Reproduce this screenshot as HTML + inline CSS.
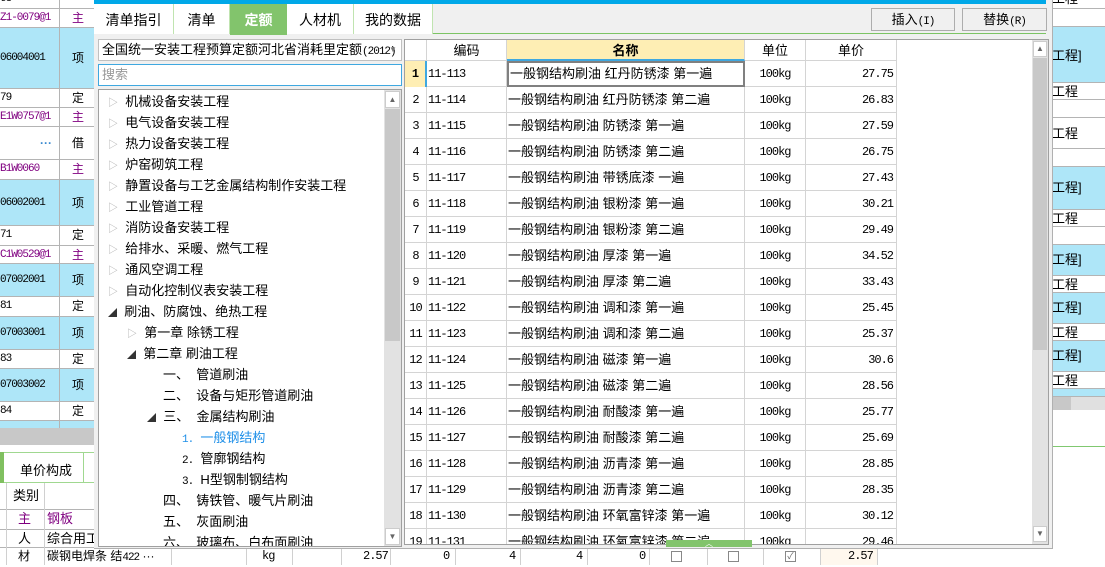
<!DOCTYPE html>
<html><head><meta charset="utf-8"><style>
*{box-sizing:border-box;margin:0;padding:0}
body{width:1105px;height:565px;overflow:hidden;background:#fff;position:relative;font-family:"Liberation Sans","Noto Sans CJK SC","WenQuanYi Zen Hei",sans-serif;font-size:13px;color:#000}
.a{position:absolute}
.bg{position:absolute;border-bottom:1px solid #b4b4b4;white-space:nowrap;overflow:hidden;line-height:18px}
.blue{background:#aee6f8}
.t{position:absolute;white-space:nowrap}
.tree div{position:absolute;white-space:nowrap;height:21px;line-height:21px}
.grid .r{position:absolute;left:0;width:492px;height:26px;border-bottom:1px solid #d4d4d4}
.grid .c{position:absolute;top:0;height:26px;line-height:26px;border-right:1px solid #d4d4d4;white-space:nowrap;overflow:hidden;padding:0 3px}
.mono{font-family:"Liberation Mono","DejaVu Sans Mono",monospace;font-size:12px;letter-spacing:-1px}
.ms{font-family:"Liberation Mono","DejaVu Sans Mono",monospace;font-size:11px;letter-spacing:-1px}
.tri{color:#aaa;font-size:10px}
.tri2{color:#333;font-size:9px}
</style></head><body>

<!-- background left -->
<div class="a" style="left:0;top:0;width:94px;height:430px;font-size:12px">
 <div class="bg" style="top:-10px;height:19px;width:94px"><span class="t ms" style="left:0;top:0">68</span></div>
 <div class="bg" style="top:9px;height:19px;width:94px;color:#800080"><span class="t ms" style="left:0">Z1-0079@1</span><span class="t" style="left:72px">主</span></div>
 <div class="bg blue" style="top:28px;height:61px;width:94px"><span class="t ms" style="left:0;top:21px">06004001</span><span class="t" style="left:72px;top:21px">项</span></div>
 <div class="bg" style="top:89px;height:19px;width:94px"><span class="t ms" style="left:0">79</span><span class="t" style="left:72px">定</span></div>
 <div class="bg" style="top:108px;height:19px;width:94px;color:#800080"><span class="t ms" style="left:0">E1W0757@1</span><span class="t" style="left:72px">主</span></div>
 <div class="bg" style="top:127px;height:33px;width:94px"><span class="t" style="left:40px;top:7px;color:#3a8ad0;font-weight:bold">···</span><span class="t" style="left:72px;top:7px">借</span></div>
 <div class="bg" style="top:160px;height:20px;width:94px;color:#800080"><span class="t ms" style="left:0">B1W0060</span><span class="t" style="left:72px">主</span></div>
 <div class="bg blue" style="top:180px;height:46px;width:94px"><span class="t ms" style="left:0;top:14px">06002001</span><span class="t" style="left:72px;top:14px">项</span></div>
 <div class="bg" style="top:226px;height:20px;width:94px"><span class="t ms" style="left:0">71</span><span class="t" style="left:72px">定</span></div>
 <div class="bg" style="top:246px;height:18px;width:94px;color:#800080"><span class="t ms" style="left:0">C1W0529@1</span><span class="t" style="left:72px">主</span></div>
 <div class="bg blue" style="top:264px;height:33px;width:94px"><span class="t ms" style="left:0;top:7px">07002001</span><span class="t" style="left:72px;top:7px">项</span></div>
 <div class="bg" style="top:297px;height:20px;width:94px"><span class="t ms" style="left:0">81</span><span class="t" style="left:72px">定</span></div>
 <div class="bg blue" style="top:317px;height:33px;width:94px"><span class="t ms" style="left:0;top:7px">07003001</span><span class="t" style="left:72px;top:7px">项</span></div>
 <div class="bg" style="top:350px;height:19px;width:94px"><span class="t ms" style="left:0">83</span><span class="t" style="left:72px">定</span></div>
 <div class="bg blue" style="top:369px;height:33px;width:94px"><span class="t ms" style="left:0;top:7px">07003002</span><span class="t" style="left:72px;top:7px">项</span></div>
 <div class="bg" style="top:402px;height:19px;width:94px"><span class="t ms" style="left:0">84</span><span class="t" style="left:72px">定</span></div>
 <div class="bg blue" style="top:421px;height:9px;width:94px"></div>
 <div class="a" style="left:59px;top:0;width:1px;height:430px;background:#b4b4b4"></div>
</div>
<div class="a" style="left:0;top:428px;width:94px;height:17px;background:#c8c8c8"></div>
<div class="a" style="left:0;top:452px;width:94px;height:31px;border-top:1px solid #a0d890;border-bottom:1px solid #a0d890"></div>
<div class="a" style="left:0;top:452px;width:4px;height:31px;background:#80c060"></div>
<div class="t" style="left:20px;top:460px">单价构成</div>
<div class="a" style="left:83px;top:452px;width:1px;height:31px;background:#a0d890"></div>
<div class="a" style="left:0;top:483px;width:94px;height:82px">
 <div class="bg" style="top:0;height:27px;width:94px"><span class="t" style="left:13px;top:4px">类别</span></div>
 <div class="bg" style="top:27px;height:20px;width:94px;color:#800080"><span class="t" style="left:18px">主</span><span class="t" style="left:47px">钢板</span></div>
 <div class="bg" style="top:47px;height:18px;width:94px"><span class="t" style="left:18px">人</span><span class="t" style="left:47px">综合用工</span></div>
 <div class="a" style="left:6px;top:0;width:1px;height:82px;background:#d0d0d0"></div>
 <div class="a" style="left:44px;top:0;width:1px;height:82px;background:#d0d0d0"></div>
</div>
<!-- bottom row -->
<div class="a" style="left:0;top:548px;width:1105px;height:17px;line-height:17px;font-size:12px">
 <span class="t" style="left:18px">材</span><span class="t" style="left:47px">碳钢电焊条 结<span class="ms">422</span> ···</span>
 <span class="t mono" style="left:262px">kg</span><span class="t mono" style="left:363px">2.57</span>
 <span class="t mono" style="left:443px">0</span><span class="t mono" style="left:509px">4</span><span class="t mono" style="left:576px">4</span><span class="t mono" style="left:639px">0</span>
 <span class="a" style="left:671px;top:3px;width:11px;height:11px;border:1px solid #888"></span>
 <span class="a" style="left:728px;top:3px;width:11px;height:11px;border:1px solid #888"></span>
 <span class="a" style="left:785px;top:3px;width:11px;height:11px;border:1px solid #888;font-size:9px;line-height:9px;color:#666;text-align:center">✓</span>
 <span class="a" style="left:820px;top:0;width:57px;height:17px;background:#fff8ee"></span>
 <span class="t mono" style="left:848px">2.57</span>
 <span class="a" style="left:44px;top:0;width:1px;height:17px;background:#d0d0d0"></span>
 <span class="a" style="left:171px;top:0;width:1px;height:17px;background:#d0d0d0"></span>
 <span class="a" style="left:246px;top:0;width:1px;height:17px;background:#d0d0d0"></span>
 <span class="a" style="left:292px;top:0;width:1px;height:17px;background:#d0d0d0"></span>
 <span class="a" style="left:341px;top:0;width:1px;height:17px;background:#d0d0d0"></span>
 <span class="a" style="left:390px;top:0;width:1px;height:17px;background:#d0d0d0"></span>
 <span class="a" style="left:455px;top:0;width:1px;height:17px;background:#d0d0d0"></span>
 <span class="a" style="left:520px;top:0;width:1px;height:17px;background:#d0d0d0"></span>
 <span class="a" style="left:587px;top:0;width:1px;height:17px;background:#d0d0d0"></span>
 <span class="a" style="left:649px;top:0;width:1px;height:17px;background:#d0d0d0"></span>
 <span class="a" style="left:707px;top:0;width:1px;height:17px;background:#d0d0d0"></span>
 <span class="a" style="left:763px;top:0;width:1px;height:17px;background:#d0d0d0"></span>
 <span class="a" style="left:820px;top:0;width:1px;height:17px;background:#d0d0d0"></span>
 <span class="a" style="left:877px;top:0;width:1px;height:17px;background:#d0d0d0"></span>
</div>

<!-- background right -->
<div class="a" style="left:1052px;top:0;width:53px;height:410px;font-size:13px">
 <div class="bg" style="top:-10px;height:19px;width:53px"><span class="t" style="left:0;top:0">工程</span></div>
 <div class="bg" style="top:9px;height:18px;width:53px"></div>
 <div class="bg blue" style="top:27px;height:56px;width:53px"><span class="t" style="left:0;top:20px">工程]</span></div>
 <div class="bg" style="top:83px;height:17px;width:53px"><span class="t" style="left:0">工程</span></div>
 <div class="bg" style="top:100px;height:18px;width:53px"></div>
 <div class="bg" style="top:118px;height:31px;width:53px"><span class="t" style="left:0;top:7px">工程</span></div>
 <div class="bg" style="top:149px;height:18px;width:53px"></div>
 <div class="bg blue" style="top:167px;height:43px;width:53px"><span class="t" style="left:0;top:12px">工程]</span></div>
 <div class="bg" style="top:210px;height:17px;width:53px"><span class="t" style="left:0">工程</span></div>
 <div class="bg" style="top:227px;height:18px;width:53px"></div>
 <div class="bg blue" style="top:245px;height:31px;width:53px"><span class="t" style="left:0;top:6px">工程]</span></div>
 <div class="bg" style="top:276px;height:17px;width:53px"><span class="t" style="left:0">工程</span></div>
 <div class="bg blue" style="top:293px;height:31px;width:53px"><span class="t" style="left:0;top:6px">工程]</span></div>
 <div class="bg" style="top:324px;height:17px;width:53px"><span class="t" style="left:0">工程</span></div>
 <div class="bg blue" style="top:341px;height:31px;width:53px"><span class="t" style="left:0;top:6px">工程]</span></div>
 <div class="bg" style="top:372px;height:17px;width:53px"><span class="t" style="left:0">工程</span></div>
 <div class="bg blue" style="top:389px;height:8px;width:53px"></div>
</div>
<div class="a" style="left:1052px;top:397px;width:53px;height:13px;background:#e0e0e0"></div>
<div class="a" style="left:1052px;top:397px;width:19px;height:13px;background:#c8c8c8"></div>
<div class="a" style="left:1052px;top:446px;width:53px;height:1px;background:#80c870"></div>

<!-- dialog -->
<div class="a" style="left:94px;top:0;width:959px;height:549px;background:#f0f0f0;border-right:1px solid #b0b0b0;border-bottom:1px solid #b0b0b0"></div>
<div class="a" style="left:94px;top:0;width:952px;height:4px;background:#00a8e8"></div>
<!-- tabs -->
<div class="a" style="left:94px;top:4px;width:952px;height:30px;border-bottom:1px solid #7cc464"></div>
<div class="a" style="left:94px;top:4px;width:80px;height:30px;background:#fff;border-right:1px solid #c0e4b0;text-align:center;line-height:32px;font-size:14px">清单指引</div>
<div class="a" style="left:174px;top:4px;width:56px;height:30px;background:#fff;border-right:1px solid #c0e4b0;text-align:center;line-height:32px;font-size:14px">清单</div>
<div class="a" style="left:230px;top:4px;width:57px;height:31px;background:#82c46c;color:#fff;font-weight:bold;text-align:center;line-height:32px;font-size:14px">定额</div>
<div class="a" style="left:287px;top:4px;width:67px;height:30px;background:#fff;border-right:1px solid #c0e4b0;text-align:center;line-height:32px;font-size:14px">人材机</div>
<div class="a" style="left:354px;top:4px;width:79px;height:30px;background:#fff;border-right:1px solid #c0e4b0;text-align:center;line-height:32px;font-size:14px">我的数据</div>
<div class="a" style="left:871px;top:8px;width:84px;height:23px;border:1px solid #adadad;background:#f0f0f0;text-align:center;line-height:21px;font-size:13px">插入<span class="ms">(I)</span></div>
<div class="a" style="left:962px;top:8px;width:85px;height:23px;border:1px solid #adadad;background:#f0f0f0;text-align:center;line-height:21px;font-size:13px">替换<span class="ms">(R)</span></div>

<!-- dropdown -->
<div class="a" style="left:98px;top:39px;width:304px;height:22px;background:#fff;border:1px solid #c0c0c0;line-height:20px;padding-left:3px;font-size:13px;white-space:nowrap">全国统一安装工程预算定额河北省消耗里定额<span class="ms">(2012)</span><span class="t" style="left:290px;top:0;color:#777;font-size:8px">▼</span></div>
<div class="a" style="left:98px;top:64px;width:304px;height:22px;background:#fff;border:1px solid #3fa8e0;line-height:20px;padding-left:3px;color:#999;font-size:13px">搜索</div>
<!-- tree -->
<div class="a tree" style="left:98px;top:89px;width:304px;height:458px;background:#fff;border:1px solid #a0a0a0;overflow:hidden;font-size:13px">
 <div style="left:9px;top:1px"><span class="tri">▷</span>&nbsp; 机械设备安装工程</div>
 <div style="left:9px;top:22px"><span class="tri">▷</span>&nbsp; 电气设备安装工程</div>
 <div style="left:9px;top:43px"><span class="tri">▷</span>&nbsp; 热力设备安装工程</div>
 <div style="left:9px;top:64px"><span class="tri">▷</span>&nbsp; 炉窑砌筑工程</div>
 <div style="left:9px;top:85px"><span class="tri">▷</span>&nbsp; 静置设备与工艺金属结构制作安装工程</div>
 <div style="left:9px;top:106px"><span class="tri">▷</span>&nbsp; 工业管道工程</div>
 <div style="left:9px;top:127px"><span class="tri">▷</span>&nbsp; 消防设备安装工程</div>
 <div style="left:9px;top:148px"><span class="tri">▷</span>&nbsp; 给排水、采暖、燃气工程</div>
 <div style="left:9px;top:169px"><span class="tri">▷</span>&nbsp; 通风空调工程</div>
 <div style="left:9px;top:190px"><span class="tri">▷</span>&nbsp; 自动化控制仪表安装工程</div>
 <div style="left:9px;top:211px"><span class="tri2">◢</span>&nbsp; 刷油、防腐蚀、绝热工程</div>
 <div style="left:28px;top:232px"><span class="tri">▷</span>&nbsp; 第一章 除锈工程</div>
 <div style="left:28px;top:253px"><span class="tri2">◢</span>&nbsp; 第二章 刷油工程</div>
 <div style="left:64px;top:274px">一、&nbsp; 管道刷油</div>
 <div style="left:64px;top:295px">二、&nbsp; 设备与矩形管道刷油</div>
 <div style="left:48px;top:316px"><span class="tri2">◢</span>&nbsp; 三、&nbsp; 金属结构刷油</div>
 <div style="left:83px;top:337px;color:#1e8fe8"><span class="ms">1.</span> &nbsp;一般钢结构</div>
 <div style="left:83px;top:358px"><span class="ms">2.</span> &nbsp;管廓钢结构</div>
 <div style="left:83px;top:379px"><span class="ms">3.</span> &nbsp;H型钢制钢结构</div>
 <div style="left:64px;top:400px">四、&nbsp; 铸铁管、暖气片刷油</div>
 <div style="left:64px;top:421px">五、&nbsp; 灰面刷油</div>
 <div style="left:64px;top:442px">六、&nbsp; 玻璃布、白布面刷油</div>
 <div style="left:285px;top:0;width:17px;height:456px;background:#e2e2e2"></div>
 <div style="left:286px;top:1px;width:15px;height:17px;background:#fff;border:1px solid #ccc;font-size:8px;line-height:15px;text-align:center;color:#666">▲</div>
 <div style="left:286px;top:19px;width:15px;height:232px;background:#c8c8c8"></div>
 <div style="left:286px;top:438px;width:15px;height:17px;background:#fff;border:1px solid #ccc;font-size:8px;line-height:15px;text-align:center;color:#666">▼</div>
</div>

<!-- grid -->
<div class="a grid" style="left:404px;top:39px;width:645px;height:506px;background:#fff;border:1px solid #a0a0a0;overflow:hidden">
 <div class="r" style="top:0;height:21px;background:#fff">
  <div class="c" style="left:0;width:22px;height:21px"></div>
  <div class="c" style="left:22px;width:80px;height:21px;line-height:21px;text-align:center">编码</div>
  <div class="c" style="left:102px;width:238px;height:21px;line-height:21px;text-align:center;background:#feeeb4;font-weight:bold;border-bottom:2px solid #3fa8e0">名称</div>
  <div class="c" style="left:340px;width:61px;height:21px;line-height:21px;text-align:center">单位</div>
  <div class="c" style="left:401px;width:91px;height:21px;line-height:21px;text-align:center">单价</div>
 </div>
 <div id="rows"></div>
 <div class="a" style="left:627px;top:0;width:16px;height:504px;background:#e2e2e2"></div>
 <div class="a" style="left:628px;top:1px;width:14px;height:16px;background:#fff;border:1px solid #ccc;font-size:8px;line-height:14px;text-align:center;color:#666">▲</div>
 <div class="a" style="left:628px;top:18px;width:14px;height:292px;background:#c8c8c8"></div>
 <div class="a" style="left:628px;top:486px;width:14px;height:16px;background:#fff;border:1px solid #ccc;font-size:8px;line-height:14px;text-align:center;color:#666">▼</div>
</div>
<div class="a" style="left:666px;top:540px;width:86px;height:7px;background:#82c46c;color:#fff;font-size:8px;line-height:7px;text-align:center">︿</div>

<script>
var d=[["11-113","红丹防锈漆 第一遍","27.75"],["11-114","红丹防锈漆 第二遍","26.83"],["11-115","防锈漆 第一遍","27.59"],["11-116","防锈漆 第二遍","26.75"],["11-117","带锈底漆 一遍","27.43"],["11-118","银粉漆 第一遍","30.21"],["11-119","银粉漆 第二遍","29.49"],["11-120","厚漆 第一遍","34.52"],["11-121","厚漆 第二遍","33.43"],["11-122","调和漆 第一遍","25.45"],["11-123","调和漆 第二遍","25.37"],["11-124","磁漆 第一遍","30.6"],["11-125","磁漆 第二遍","28.56"],["11-126","耐酸漆 第一遍","25.77"],["11-127","耐酸漆 第二遍","25.69"],["11-128","沥青漆 第一遍","28.85"],["11-129","沥青漆 第二遍","28.35"],["11-130","环氧富锌漆 第一遍","30.12"],["11-131","环氧富锌漆 第二遍","29.46"]];
var h="";
for(var i=0;i<d.length;i++){var t=21+i*26;var f=i==0;
h+='<div class="r" style="top:'+t+'px">'+
'<div class="c mono" style="left:0;width:22px;text-align:center;padding:0;'+(f?'background:#feeeb4;font-weight:bold;border-right:2px solid #3fa8e0':'')+'">'+(i+1)+'</div>'+
'<div class="c mono" style="left:22px;width:80px;padding-left:1px">'+d[i][0]+'</div>'+
'<div class="c" style="left:102px;width:238px;padding:0 1px;'+(f?'border:2px solid #808080;line-height:22px':'')+'">一般钢结构刷油 '+d[i][1]+'</div>'+
'<div class="c mono" style="left:340px;width:61px;text-align:center">100kg</div>'+
'<div class="c mono" style="left:401px;width:91px;text-align:right">'+d[i][2]+'</div></div>';}
document.getElementById("rows").innerHTML=h;
</script>
</body></html>
